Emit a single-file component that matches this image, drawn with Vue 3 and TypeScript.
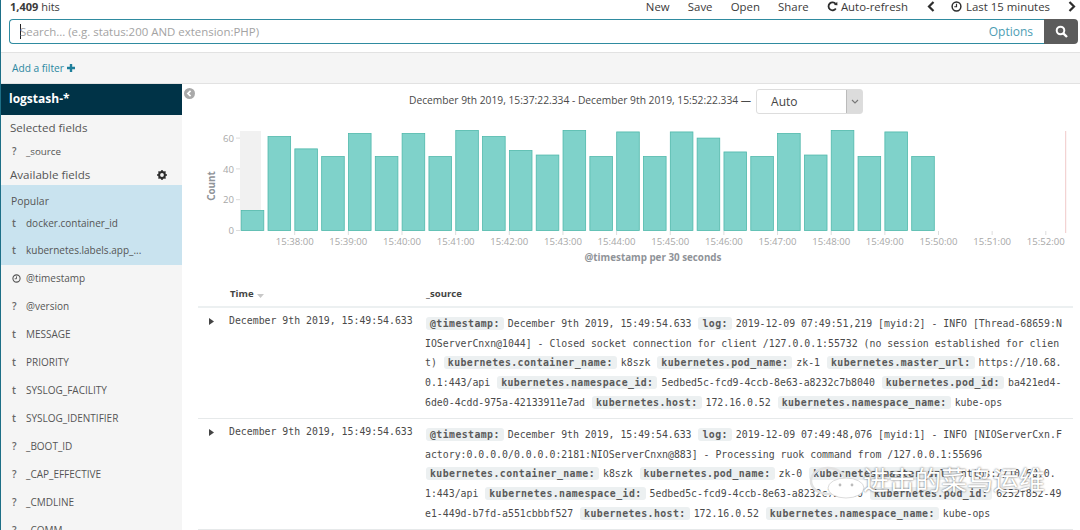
<script setup lang="ts">
const counts: number[] = [13, 61, 53, 48, 63, 48, 63, 48, 65, 61, 52, 49, 65, 48, 64, 48, 64, 60, 51, 48, 63, 49, 65, 48, 64, 48]
const baseY = 110.5
const unit = 1.54
const bars = counts.map((c, i) => ({ x: 50.7 + i * 26.82, y: baseY - c * unit, h: c * unit }))
const ticks = Array.from({ length: 15 }, (_, i) => ({ x: 104.7 + i * 53.65, label: `15:${38 + i}:00` }))
const yTicks = [0, 20, 40, 60].map((v) => ({ v, y: baseY - v * unit }))

const popular = [
  { t: 't', n: 'docker.container_id' },
  { t: 't', n: 'kubernetes.labels.app_...' },
]
const fields = [
  { t: 'clock', n: '@timestamp' },
  { t: '?', n: '@version' },
  { t: 't', n: 'MESSAGE' },
  { t: 't', n: 'PRIORITY' },
  { t: 't', n: 'SYSLOG_FACILITY' },
  { t: 't', n: 'SYSLOG_IDENTIFIER' },
  { t: '?', n: '_BOOT_ID' },
  { t: '?', n: '_CAP_EFFECTIVE' },
  { t: '?', n: '_CMDLINE' },
  { t: '?', n: '_COMM' },
]
const menu = ['New', 'Save', 'Open', 'Share']

const rows: [string, string][][] = [
  [
    ['@timestamp:', 'December 9th 2019, 15:49:54.633'],
    ['log:', '2019-12-09 07:49:51,219 [myid:2] - INFO [Thread-68659:NIOServerCnxn@1044] - Closed socket connection for client /127.0.0.1:55732 (no session established for client)'],
    ['kubernetes.container_name:', 'k8szk'],
    ['kubernetes.pod_name:', 'zk-1'],
    ['kubernetes.master_url:', 'https://10.68.0.1:443/api'],
    ['kubernetes.namespace_id:', '5edbed5c-fcd9-4ccb-8e63-a8232c7b8040'],
    ['kubernetes.pod_id:', 'ba421ed4-6de0-4cdd-975a-42133911e7ad'],
    ['kubernetes.host:', '172.16.0.52'],
    ['kubernetes.namespace_name:', 'kube-ops'],
  ],
  [
    ['@timestamp:', 'December 9th 2019, 15:49:54.633'],
    ['log:', '2019-12-09 07:49:48,076 [myid:1] - INFO [NIOServerCxn.Factory:0.0.0.0/0.0.0.0:2181:NIOServerCnxn@883] - Processing ruok command from /127.0.0.1:55696'],
    ['kubernetes.container_name:', 'k8szk'],
    ['kubernetes.pod_name:', 'zk-0'],
    ['kubernetes.master_url:', 'https://10.68.0.1:443/api'],
    ['kubernetes.namespace_id:', '5edbed5c-fcd9-4ccb-8e63-a8232c7b8040'],
    ['kubernetes.pod_id:', '6252f852-49e1-449d-b7fd-a551cbbbf527'],
    ['kubernetes.host:', '172.16.0.52'],
    ['kubernetes.namespace_name:', 'kube-ops'],
  ],
]
</script>

<template>
  <div class="page">
    <header class="top">
      <div class="hits"><b>1,409</b> hits</div>
      <nav class="menu">
        <span v-for="m in menu" :key="m" class="menu-item">{{ m }}</span>
        <span class="refresh">
          <svg width="11" height="11" viewBox="0 0 12 12"><path d="M9.6 8.2A4.3 4.3 0 1 1 9.4 3.2" fill="none" stroke="#2d2d2d" stroke-width="2"/><path d="M7.6 4.4 11.4 4.6 11.2 .9Z" fill="#2d2d2d"/></svg>
          Auto-refresh
        </span>
        <svg class="chev-l" width="8" height="11" viewBox="0 0 8 11"><path d="M6.5 1 2 5.5 6.5 10" fill="none" stroke="#2d2d2d" stroke-width="2.2"/></svg>
        <span class="range">
          <svg width="11" height="11" viewBox="0 0 12 12"><circle cx="6" cy="6" r="4.8" fill="none" stroke="#2d2d2d" stroke-width="1.6"/><path d="M6 3v3.3H3.6" fill="none" stroke="#2d2d2d" stroke-width="1.3"/></svg>
          Last 15 minutes
        </span>
        <svg class="chev-r" width="8" height="11" viewBox="0 0 8 11"><path d="M1.5 1 6 5.5 1.5 10" fill="none" stroke="#2d2d2d" stroke-width="2.2"/></svg>
      </nav>
    </header>

    <div class="search-row">
      <div class="search">
        <span class="caret"></span>
        <span class="placeholder">Search... (e.g. status:200 AND extension:PHP)</span>
        <span class="options">Options</span>
      </div>
      <button class="go">
        <svg width="13" height="13" viewBox="0 0 13 13"><circle cx="5.5" cy="5.5" r="3.8" fill="none" stroke="#fff" stroke-width="2"/><path d="M8.3 8.3 12 12" stroke="#fff" stroke-width="2.4"/></svg>
      </button>
    </div>

    <div class="filter-bar">
      <span>Add a filter</span>
      <svg width="8" height="8" viewBox="0 0 8 8"><path d="M4 0v8M0 4h8" stroke="#1f7f9b" stroke-width="2.4"/></svg>
    </div>

    <div class="main">
      <aside class="side">
        <div class="index">logstash-*</div>
        <div class="sec first">Selected fields</div>
        <div class="field src"><span class="type">?</span><span>_source</span></div>
        <div class="sec avail">
          <span>Available fields</span>
          <svg width="10" height="10" viewBox="0 0 10 10"><circle cx="5" cy="5" r="2.9" fill="none" stroke="#2c2c2c" stroke-width="2"/><path d="M5 0v2M5 8v2M0 5h2M8 5h2M1.5 1.5 3 3M7 7l1.5 1.5M8.5 1.5 7 3M3 7 1.5 8.5" stroke="#2c2c2c" stroke-width="1.5"/></svg>
        </div>
        <div class="popular">
          <div class="pop-title">Popular</div>
          <div v-for="f in popular" :key="f.n" class="field"><span class="type">{{ f.t }}</span><span>{{ f.n }}</span></div>
        </div>
        <div class="list">
          <div v-for="f in fields" :key="f.n" class="field">
            <span class="type">
              <svg v-if="f.t === 'clock'" width="9" height="9" viewBox="0 0 10 10"><circle cx="5" cy="5" r="4" fill="none" stroke="#555" stroke-width="1.2"/><path d="M5 2.6v2.7H3" fill="none" stroke="#555"/></svg>
              <template v-else>{{ f.t }}</template>
            </span>
            <span>{{ f.n }}</span>
          </div>
        </div>
      </aside>

      <section class="content">
        <div class="collapse">
          <svg width="11" height="11" viewBox="0 0 11 11"><circle cx="5.5" cy="5.5" r="5.5" fill="#a9a9a9"/><path d="M6.6 2.8 3.9 5.5 6.6 8.2" fill="none" stroke="#fff" stroke-width="1.7"/></svg>
        </div>
        <div class="range-row">
          <span>December 9th 2019, 15:37:22.334 - December 9th 2019, 15:52:22.334 —</span>
          <div class="select">
            <span class="sel-val">Auto</span>
            <span class="sel-btn"><svg width="8" height="5" viewBox="0 0 8 5"><path d="M1 1l3 3 3-3" fill="none" stroke="#777" stroke-width="1.1"/></svg></span>
          </div>
        </div>

        <svg class="chart" width="890" height="150" viewBox="0 0 890 150">
          <rect x="50" y="11" width="21" height="100" fill="#f1f1f1"/>
          <g v-for="t in yTicks" :key="t.v">
            <text class="tick" :x="44" :y="t.y + 3.6" text-anchor="end">{{ t.v }}</text>
            <line x1="46" x2="50" :y1="t.y" :y2="t.y" stroke="#ddd"/>
          </g>
          <text class="axis" transform="translate(25 66) rotate(-90)" text-anchor="middle">Count</text>
          <rect v-for="(b, i) in bars" :key="i" :x="b.x + 0.5" :y="b.y" width="22.6" :height="b.h" fill="#7fd2ca" stroke="#50b8ab" stroke-width="0.8"/>
          <g v-for="t in ticks" :key="t.label">
            <line :x1="t.x" :x2="t.x" y1="111" y2="115" stroke="#ddd"/>
            <text class="tick" :x="t.x" y="125" text-anchor="middle">{{ t.label }}</text>
          </g>
          <line x1="875.7" x2="875.7" y1="11" y2="113" stroke="#f0c9c9" stroke-width="1"/>
          <text class="axis" x="463" y="141" text-anchor="middle">@timestamp per 30 seconds</text>
        </svg>

        <div class="table">
          <div class="thead">
            <span class="th-time">Time
              <svg width="7" height="4" viewBox="0 0 7 4"><path d="M0 0h7L3.5 4Z" fill="#c8c8c8"/></svg>
            </span>
            <span class="th-src">_source</span>
          </div>
          <div v-for="(r, i) in rows" :key="i" class="row">
            <svg class="expand" width="5" height="7" viewBox="0 0 5 7"><path d="M0 0l5 3.5L0 7Z" fill="#444"/></svg>
            <div class="time">December 9th 2019, 15:49:54.633</div>
            <div class="source">
              <template v-for="p in r" :key="p[0]"><span class="chip">{{ p[0] }}</span>{{ p[1] }}{{ ' ' }}</template>
            </div>
          </div>
        </div>
      </section>
    </div>

    <div class="watermark">
      <svg class="wm-icon" width="50" height="34" viewBox="0 0 50 34">
        <ellipse cx="18" cy="19" rx="17" ry="13" fill="none" stroke="#e2e2e2" stroke-width="2.5"/>
        <ellipse cx="36" cy="26" rx="18" ry="10" fill="#fff" stroke="#dcdcdc" stroke-width="1"/>
        <circle cx="30" cy="23" r="1.4" fill="#bbb"/>
        <circle cx="42" cy="23" r="1.4" fill="#bbb"/>
      </svg>
      <span>进击的菜鸟运维</span>
    </div>
  </div>
</template>

<style>
html, body { margin: 0; background: #fff; }
</style>

<style scoped>
.page {
  position: relative;
  width: 1080px;
  height: 530px;
  overflow: hidden;
  box-sizing: border-box;
  border-left: 1px solid #1d6f87;
  font-family: "Open Sans", "Noto Sans", sans-serif;
  color: #3a3a3a;
  background: #fff;
}
.top {
  height: 19px;
  box-sizing: border-box;
  display: flex;
  justify-content: space-between;
  align-items: flex-start;
  padding-left: 9px;
  font-size: 11.4px;
  line-height: 13px;
}
.hits { font-size: 11px; }
.hits b { font-weight: 700; }
.menu { display: flex; align-items: center; height: 13px; }
.menu-item { margin-right: 18.2px; }
.refresh { display: flex; align-items: center; gap: 3px; }
.chev-l { margin-left: 19px; }
.range { display: flex; align-items: center; gap: 4px; margin-left: 16px; }
.chev-r { margin-left: 18px; margin-right: 4px; }

.search-row { display: flex; padding: 0 2px 0 8px; height: 25px; }
.search {
  flex: 1;
  display: flex;
  align-items: center;
  box-sizing: border-box;
  border: 1px solid #2f8ba0;
  border-right: 0;
  border-radius: 4px 0 0 4px;
  padding-left: 10px;
  font-size: 12px;
}
.caret { width: 1px; height: 15px; background: #222; margin-right: -1px; }
.placeholder { color: #a3a3a3; flex: 1; font-size: 11.45px; }
.options { color: #4d9db3; margin-right: 11px; }
.go {
  width: 34px;
  border: 0;
  padding: 0;
  background: #5c5c5c;
  border-radius: 0 4px 4px 0;
  display: flex;
  align-items: center;
  justify-content: center;
}
.filter-bar {
  margin-top: 8px;
  height: 32px;
  box-sizing: border-box;
  background: #f5f5f5;
  border-top: 1px solid #e2e2e2;
  border-bottom: 1px solid #e2e2e2;
  padding-left: 11px;
  display: flex;
  align-items: center;
  gap: 3px;
  font-size: 10.2px;
  color: #2b87a1;
}

.main { display: flex; height: 446px; }
.side { width: 181px; flex: none; background: #f5f5f5; font-size: 10px; color: #555; }
.index {
  height: 31px;
  line-height: 30px;
  background: #003347;
  color: #fff;
  font-weight: 700;
  font-size: 12px;
  padding-left: 8px;
}
.sec { font-size: 11.6px; padding-left: 9px; color: #555; }
.sec.first { margin-top: 4px; line-height: 17px; }
.sec.avail {
  margin-top: 5px;
  line-height: 17px;
  height: 17px;
  display: flex;
  justify-content: space-between;
  align-items: center;
  padding-right: 15px;
}
.field { display: flex; align-items: center; height: 28px; padding-left: 10px; }
.field.src { height: 19px; margin-top: 6px; font-size: 9.8px; }
.type { width: 15px; flex: none; font-weight: 600; color: #666; padding-left: 1px; box-sizing: border-box; display: flex; }
.popular { background: #c9e3ef; margin-top: 2px; height: 80px; padding-top: 8px; box-sizing: border-box; }
.pop-title { padding-left: 10px; font-size: 10.4px; line-height: 16px; }
.popular .field { height: 27px; }
.list { margin-top: -1px; }

.content { position: relative; flex: 1; min-width: 0; }
.collapse { position: absolute; left: 2px; top: 4px; line-height: 0; }
.range-row {
  height: 31px;
  display: flex;
  align-items: center;
  font-size: 10.25px;
  color: #4a4a4a;
  padding: 1px 0 0 227px;
  box-sizing: border-box;
  gap: 5px;
}
.select {
  position: relative;
  top: 1px;
  width: 107px;
  height: 25px;
  box-sizing: border-box;
  border: 1px solid #ddd;
  border-radius: 3px;
  display: flex;
  justify-content: space-between;
  font-size: 12px;
  line-height: 24px;
  color: #444;
}
.sel-val { padding-left: 14px; }
.sel-btn {
  width: 15px;
  background: #dcdcdc;
  display: flex;
  align-items: center;
  justify-content: center;
  border-left: 1px solid #bbb;
}
.chart { display: block; margin: 5px 0 0 8px; }
.tick { font-family: "Open Sans", sans-serif; font-size: 9.6px; fill: #a8a8a8; }
.axis { font-family: "Open Sans", sans-serif; font-size: 9.8px; font-weight: 700; fill: #8f9398; }

.table { margin: 17px 7px 0 16px; }
.thead {
  display: flex;
  height: 19px;
  border-bottom: 2px solid #ecf0f1;
  font-size: 9.6px;
  font-weight: 700;
  color: #444;
  line-height: 14px;
}
.th-time { width: 228px; padding-left: 32px; box-sizing: border-box; }
.th-time svg { margin: 0 0 -1px 1px; }
.row {
  position: relative;
  display: flex;
  border-bottom: 1px solid #e6e9ea;
  padding-top: 6px;
  height: 111px;
  box-sizing: border-box;
  font-family: "DejaVu Sans Mono", "Liberation Mono", monospace;
  font-size: 9.85px;
  color: #4a4a4a;
}
.expand { position: absolute; left: 11px; top: 10px; }
.time { width: 228px; padding-left: 31px; box-sizing: border-box; line-height: 14px; flex: none; }
.source { width: 639.5px; margin-left: -1px; line-height: 19.7px; word-break: break-all; flex: none; }
.chip {
  background: #ecf0f1;
  border-radius: 3px;
  padding: 1px 4px;
  margin: 0 4px 0 1px;
  font-weight: 700;
  letter-spacing: .42px;
  white-space: nowrap;
  color: #5a5a5a;
}
.watermark {
  position: absolute;
  left: 809px;
  top: 462px;
  display: flex;
  align-items: center;
  gap: 3px;
  font-family: "Noto Sans CJK SC", sans-serif;
  font-size: 26px;
  line-height: 34px;
  color: #fff;
  text-shadow: 0 0 2px rgba(60, 60, 60, .9);
}
.wm-icon { overflow: visible; }
</style>
